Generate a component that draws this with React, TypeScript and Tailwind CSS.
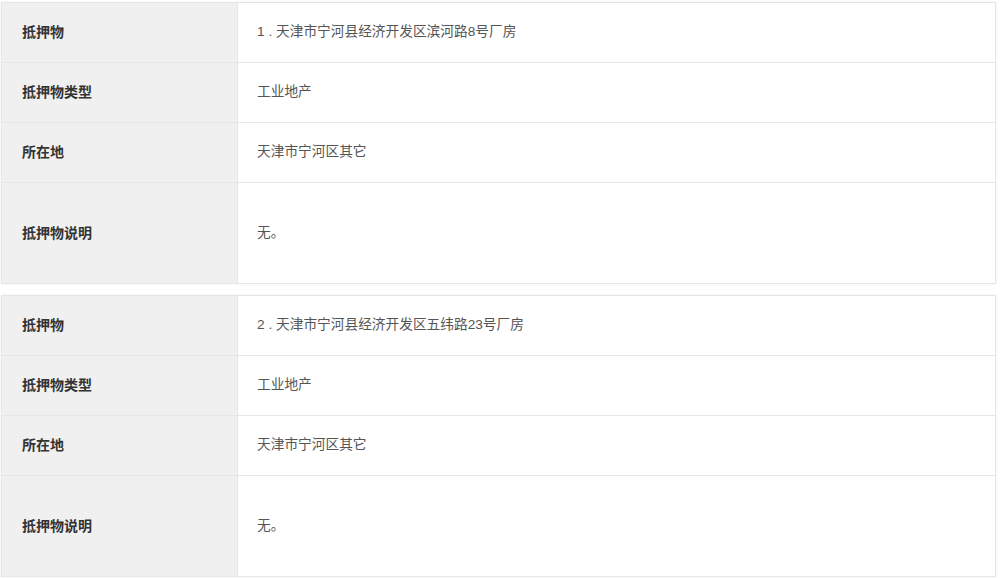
const items = [
  { name: "1 . 天津市宁河县经济开发区滨河路8号厂房", type: "工业地产", place: "天津市宁河区其它", note: "无。" },
  { name: "2 . 天津市宁河县经济开发区五纬路23号厂房", type: "工业地产", place: "天津市宁河区其它", note: "无。" },
];

function Row({ label, value, tall }: { label: string; value: string; tall?: boolean }) {
  return (
    <tr className={tall ? "h-[101px]" : "h-[60px]"}>
      <th className="w-[236px] bg-[#f0f0f0] border border-[#e6e6e6] pl-[20px] text-left align-middle font-bold text-[14px] text-[#333]">
        {label}
      </th>
      <td className="border border-[#e6e6e6] pl-[19px] align-middle text-[13.7px] text-[#555]">{value}</td>
    </tr>
  );
}

export default function App() {
  return (
    <div
      className="w-[1000px] h-[578px] bg-white pt-[2px] pl-[1px] pr-[4px] flex flex-col gap-[11px]"
      style={{ fontFamily: '"Liberation Sans", "Noto Sans CJK SC", sans-serif' }}
    >
      {items.map((it) => (
        <table key={it.name} className="w-full border-collapse shadow-[0_0_2px_rgba(0,0,0,0.08)]">
          <tbody>
            <Row label="抵押物" value={it.name} />
            <Row label="抵押物类型" value={it.type} />
            <Row label="所在地" value={it.place} />
            <Row label="抵押物说明" value={it.note} tall />
          </tbody>
        </table>
      ))}
    </div>
  );
}
